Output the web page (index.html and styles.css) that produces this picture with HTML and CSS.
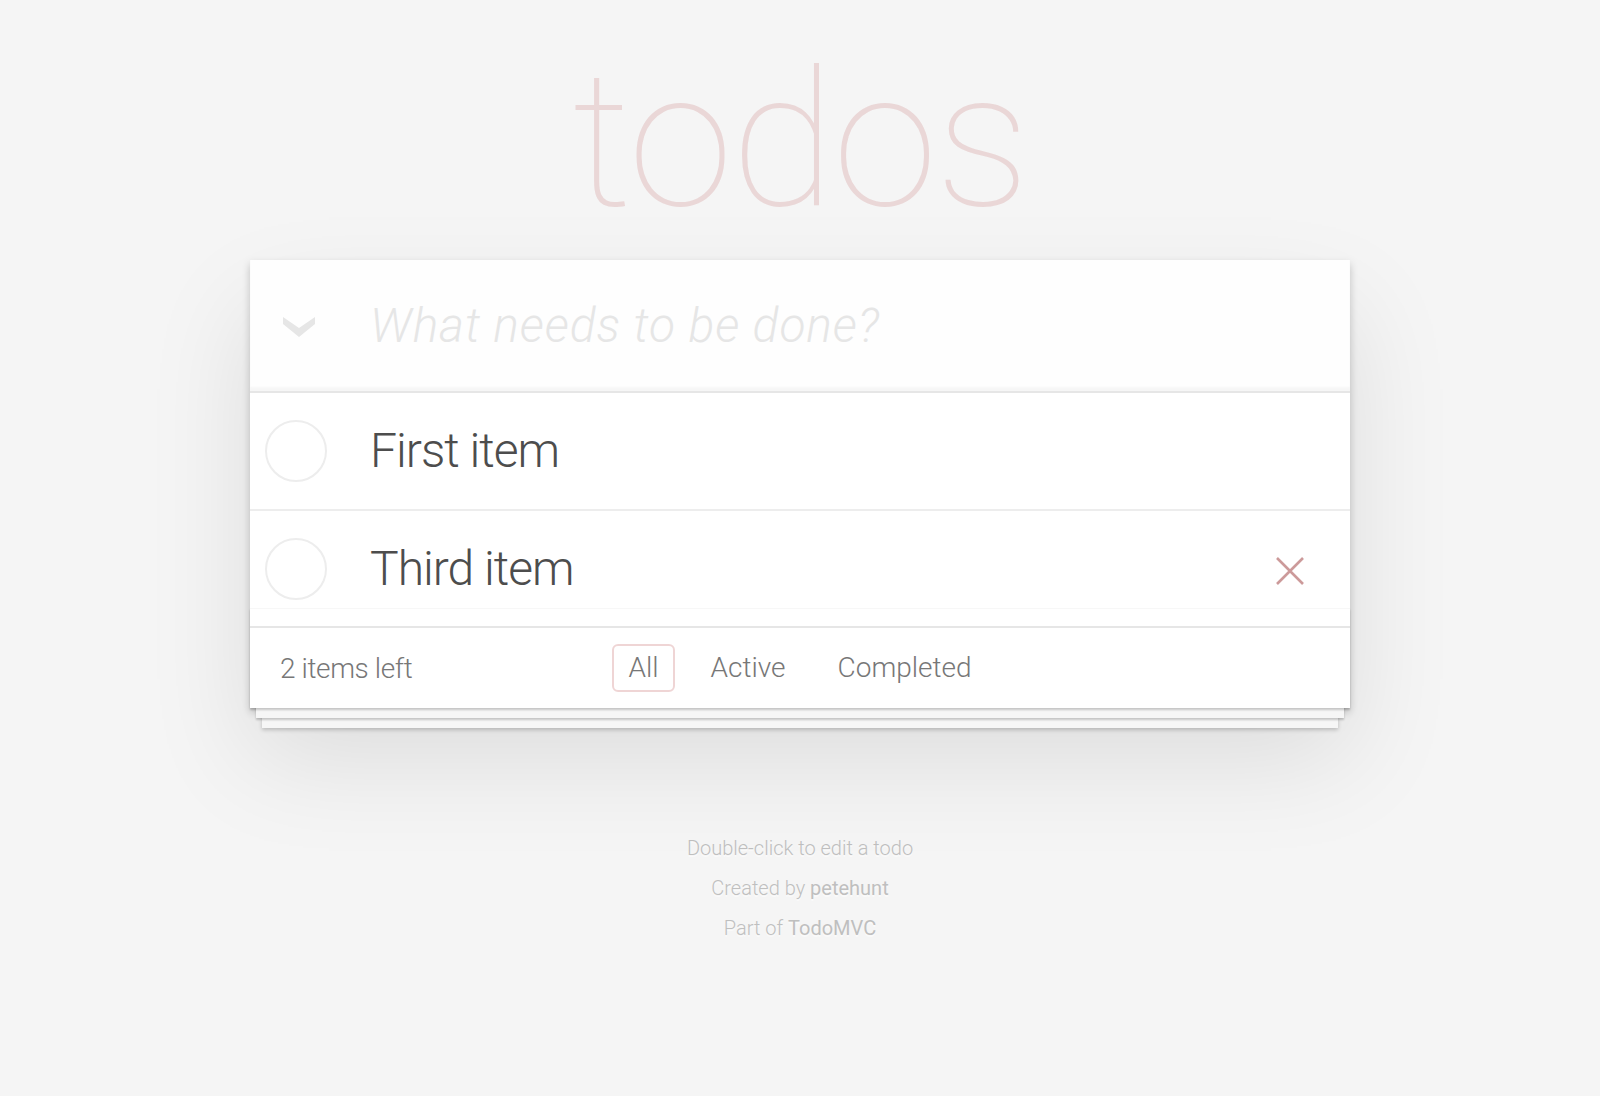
FILE: index.html
```html
<!DOCTYPE html>
<html lang="en">
<head>
<meta charset="utf-8">
<title>React • TodoMVC</title>
<link rel="stylesheet" href="styles.css">
</head>
<body class="page">
  <div class="wrap">
    <h1 class="title">todos</h1>
    <section class="todoapp">
      <header class="header">
        <span class="toggle-all" aria-label="Mark all as complete">
          <svg width="32" height="22" viewBox="0 0 32 22"><path d="M0 1 L16 12 L32 1 L32 8 L16 21 L0 8 Z" fill="#e6e6e6"/></svg>
        </span>
        <input class="new-todo" placeholder="What needs to be done?">
      </header>
      <section class="main">
        <ul class="todo-list">
          <li class="todo">
            <span class="toggle"><svg width="64" height="64" viewBox="0 0 64 64"><circle cx="32" cy="32" r="30" fill="none" stroke="#ededed" stroke-width="2"/></svg></span>
            <label class="todo-label">First item</label>
          </li>
          <li class="todo">
            <span class="toggle"><svg width="64" height="64" viewBox="0 0 64 64"><circle cx="32" cy="32" r="30" fill="none" stroke="#ededed" stroke-width="2"/></svg></span>
            <label class="todo-label">Third item</label>
            <button class="destroy" aria-label="Delete"><svg width="28" height="28" viewBox="0 0 28 28"><path d="M1 1 L27 27 M27 1 L1 27" stroke="#cc9a9a" stroke-width="2.6" fill="none"/></svg></button>
          </li>
        </ul>
      </section>
      <footer class="footer">
        <span class="todo-count"><strong class="count-num">2</strong> items left</span>
        <ul class="filters">
          <li><a class="filter selected" href="#/">All</a></li>
          <li><a class="filter" href="#/active">Active</a></li>
          <li><a class="filter" href="#/completed">Completed</a></li>
        </ul>
        <span class="spacer"></span>
      </footer>
    </section>
    <footer class="info">
      <p class="info-line">Double-click to edit a todo</p>
      <p class="info-line">Created by <a class="info-link" href="#">petehunt</a></p>
      <p class="info-line">Part of <a class="info-link" href="#">TodoMVC</a></p>
    </footer>
  </div>
</body>
</html>
```
FILE: styles.css
```css
html, body { margin: 0; padding: 0; }
.page {
  font-family: "Helvetica Neue", Roboto, "Liberation Sans", Arial, sans-serif;
  font-size: 28px;
  line-height: 39.2px;
  background: #f5f5f5;
  color: #4d4d4d;
  font-weight: 300;
}
.wrap {
  max-width: 1100px;
  margin: 0 auto;
  padding-top: 1px;
}
.title {
  margin: 39px 0 0 0;
  height: 220px;
  font-size: 190px;
  line-height: 200px;
  letter-spacing: -2px;
  font-weight: 100;
  text-align: center;
  color: rgba(175, 47, 47, 0.15);
}
.todoapp {
  background: #fff;
  margin: 0 0 80px 0;
  position: relative;
  box-shadow: 0 4px 8px 0 rgba(0,0,0,0.2), 0 50px 100px 0 rgba(0,0,0,0.1);
}
.header {
  display: flex;
  align-items: center;
  position: relative;
  background: rgba(0,0,0,0.003);
  box-shadow: inset 0 -4px 2px rgba(0,0,0,0.03);
}
.toggle-all {
  width: 120px;
  flex: none;
  display: flex;
  justify-content: flex-start;
  padding-left: 33px;
  box-sizing: border-box;
  margin-top: 2px;
}
.toggle-all svg { display: block; }
.new-todo {
  flex: 1;
  min-width: 0;
  margin: 0;
  border: none;
  outline: none;
  background: transparent;
  font-family: inherit;
  font-size: 48px;
  font-weight: 300;
  line-height: 67.2px;
  height: 131.2px;
  padding: 32px 32px 32px 0;
  box-sizing: border-box;
  color: inherit;
}
.new-todo::placeholder {
  font-style: italic;
  font-weight: 300;
  letter-spacing: 0.9px;
  color: #e6e6e6;
}
.main {
  position: relative;
  z-index: 2;
  border-top: 2px solid #e6e6e6;
}
.todo-list {
  margin: 0;
  padding: 0;
  list-style: none;
}
.todo {
  display: flex;
  align-items: center;
  font-size: 48px;
  border-bottom: 2px solid #ededed;
}
.todo:last-child { border-bottom: none; }
.toggle {
  width: 92px;
  flex: none;
  display: flex;
  justify-content: center;
  align-items: center;
}
.toggle svg { display: block; }
.todo-label {
  flex: 1;
  display: block;
  padding: 29px 30px 29px 28px;
  line-height: 1.2;
  letter-spacing: -1px;
  color: #4d4d4d;
}
.destroy {
  width: 80px;
  height: 80px;
  margin: 4px 20px 0 0;
  padding: 0;
  border: none;
  background: none;
  display: flex;
  align-items: center;
  justify-content: center;
  flex: none;
}
.destroy svg { display: block; }
.footer {
  position: relative;
  display: grid;
  grid-template-columns: 1fr auto 1fr;
  grid-template-rows: 40px;
  align-items: center;
  color: #777;
  padding: 20px 30px;
  height: 40px;
  border-top: 2px solid #e6e6e6;
}
.footer::before {
  content: '';
  position: absolute;
  right: 0;
  bottom: 0;
  left: 0;
  height: 100px;
  overflow: hidden;
  border-top: 1px solid #f7f7f7;
  box-sizing: border-box;
  box-shadow: 0 2px 2px rgba(0,0,0,0.2),
              0 16px 0 -6px #f6f6f6,
              0 18px 2px -6px rgba(0,0,0,0.2),
              0 32px 0 -12px #f6f6f6,
              0 34px 4px -12px rgba(0,0,0,0.2);
  pointer-events: none;
}
.todo-count { text-align: left; letter-spacing: -0.4px; }
.count-num { font-weight: 300; }
.filters {
  display: flex;
  gap: 8px;
  margin: 0;
  padding: 0;
  list-style: none;
}
.filter {
  display: block;
  color: inherit;
  margin: 0 6px;
  padding: 6px 14px;
  line-height: 32px;
  text-decoration: none;
  border: 2px solid transparent;
  border-radius: 6px;
}
.filter.selected { border-color: rgba(175, 47, 47, 0.2); }
.info {
  margin: 130px auto 0;
  color: #bfbfbf;
  font-size: 20px;
  text-shadow: 0 2px 0 rgba(255,255,255,0.5);
  text-align: center;
}
.info-line { line-height: 1; margin: 20px 0; }
.info-link { color: inherit; text-decoration: none; font-weight: 400; }
```
